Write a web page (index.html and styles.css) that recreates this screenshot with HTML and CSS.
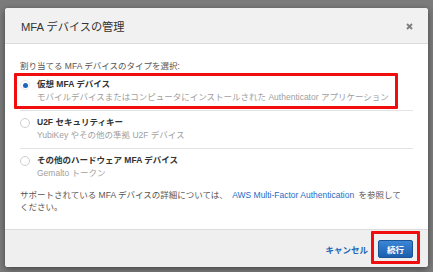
FILE: index.html
```html
<!doctype html>
<html lang="ja">

<head>
    <meta charset="utf-8">
    <meta name="viewport" content="width=device-width, initial-scale=1">
    <title>MFA デバイスの管理</title>
    <link rel="stylesheet" href="styles.css">
</head>

<body>
    <div class="modal">
        <div class="modal-header">
            <h2 class="modal-title">MFA デバイスの管理</h2>
            <button type="button" class="close">
                <svg width="7" height="7" viewBox="0 0 7 7"><path d="M1 1L6 6M6 1L1 6" stroke="#7d7d7d" stroke-width="1.8"/></svg>
            </button>
        </div>

        <div class="modal-body">
            <p class="prompt">割り当てる MFA デバイスのタイプを選択:</p>

            <!-- options -->
            <div class="option highlight">
                <span class="radio checked"></span>
                <div class="option-text">
                    <div class="option-title">仮想 MFA デバイス</div>
                    <div class="option-desc">モバイルデバイスまたはコンピュータにインストールされた Authenticator アプリケーション</div>
                </div>
            </div>
            <div class="option">
                <span class="radio"></span>
                <div class="option-text">
                    <div class="option-title">U2F セキュリティキー</div>
                    <div class="option-desc">YubiKey やその他の準拠 U2F デバイス</div>
                </div>
            </div>
            <div class="option last">
                <span class="radio"></span>
                <div class="option-text">
                    <div class="option-title">その他のハードウェア MFA デバイス</div>
                    <div class="option-desc">Gemalto トークン</div>
                </div>
            </div>

            <p class="note">サポートされている MFA デバイスの詳細については、 <a href="#" class="link">AWS Multi-Factor Authentication</a> を参照してください。</p>
        </div>

        <div class="modal-footer">
            <a href="#" class="cancel">キャンセル</a>
            <span class="focus-box">
                <button type="button" class="btn-primary">続行</button>
            </span>
        </div>
    </div>
</body>

</html>
```

FILE: styles.css
```css
body {
   margin: 0;
   padding: 8px 5px 5px 5px;
   background-color: #7b7b7b;
   font-family: "Liberation Sans", "Noto Sans CJK JP", sans-serif;
   font-size: 8.5px;
   color: #444;
}

.modal {
   width: 423px;
   background-color: #fff;
   border-radius: 3px;
   box-shadow: 0 2px 6px rgba(0, 0, 0, 0.45);
   overflow: hidden;
}

/* header */
.modal-header {
   height: 35px;
   display: flex;
   align-items: center;
   justify-content: space-between;
   padding: 0 15px 0 16px;
   background-color: #f1f1f1;
   border-bottom: 1px solid #dcdcdc;
}

.modal-title {
   margin: 0;
   font-size: 11.2px;
   font-weight: normal;
   color: #333;
}

.close {
   background: none;
   border: none;
   padding: 0;
   display: flex;
   margin-top: 2px;
}

/* body */
.modal-body {
   padding: 16px 12px 16px 15px;
}

.prompt {
   margin: 0 0 1px 0;
   line-height: 12px;
   color: #555;
}

.option {
   position: relative;
   display: flex;
   align-items: flex-start;
   gap: 7px;
   padding: 5px 0 6px 0;
   margin-right: 3px;
   border-bottom: 1px solid #e3e3e3;
}

.option.last {
   border-bottom: none;
}

.highlight::after {
   content: "";
   position: absolute;
   left: -6px;
   right: 15px;
   top: 0;
   bottom: 1px;
   border: 3.5px solid #f00d0d;
   border-radius: 1px;
}

.radio {
   flex: none;
   width: 10px;
   height: 10px;
   margin-top: 2px;
   box-sizing: border-box;
   border: 1px solid #cfcfcf;
   border-radius: 50%;
   background-color: #fff;
   display: flex;
   align-items: center;
   justify-content: center;
}

.radio.checked {
   border-color: #e6e6e6;
}

.radio.checked::before {
   content: "";
   width: 5px;
   height: 5px;
   border-radius: 50%;
   background-color: #1a63c4;
}

.option-title {
   line-height: 13px;
   font-weight: bold;
   color: #333;
}

.option-desc {
   line-height: 13px;
   color: #a0a0a0;
}

.note {
   margin: 3px 10px 0 0;
   line-height: 12px;
   color: #555;
}

.link {
   color: #1f6cc4;
   text-decoration: none;
   padding: 0 2px;
}

/* footer */
.modal-footer {
   height: 37px;
   display: flex;
   align-items: center;
   justify-content: flex-end;
   padding: 0 8px 0 0;
   background-color: #efefef;
   border-top: 1px solid #dcdcdc;
}

.cancel {
   color: #1e64b4;
   font-weight: bold;
   text-decoration: none;
   margin-top: 1px;
}

.focus-box {
   display: flex;
   margin-left: 3px;
   margin-top: -2px;
   padding: 6px 4px 3px 4px;
   border: 3px solid #f00d0d;
   border-radius: 1px;
}

.btn-primary {
   width: 35px;
   height: 18px;
   padding: 0;
   font-family: inherit;
   font-size: 8.5px;
   font-weight: bold;
   color: #fff;
   background: linear-gradient(#3b86d6, #1c5fae);
   border: 1px solid #1a5396;
   border-radius: 2px;
}
```
